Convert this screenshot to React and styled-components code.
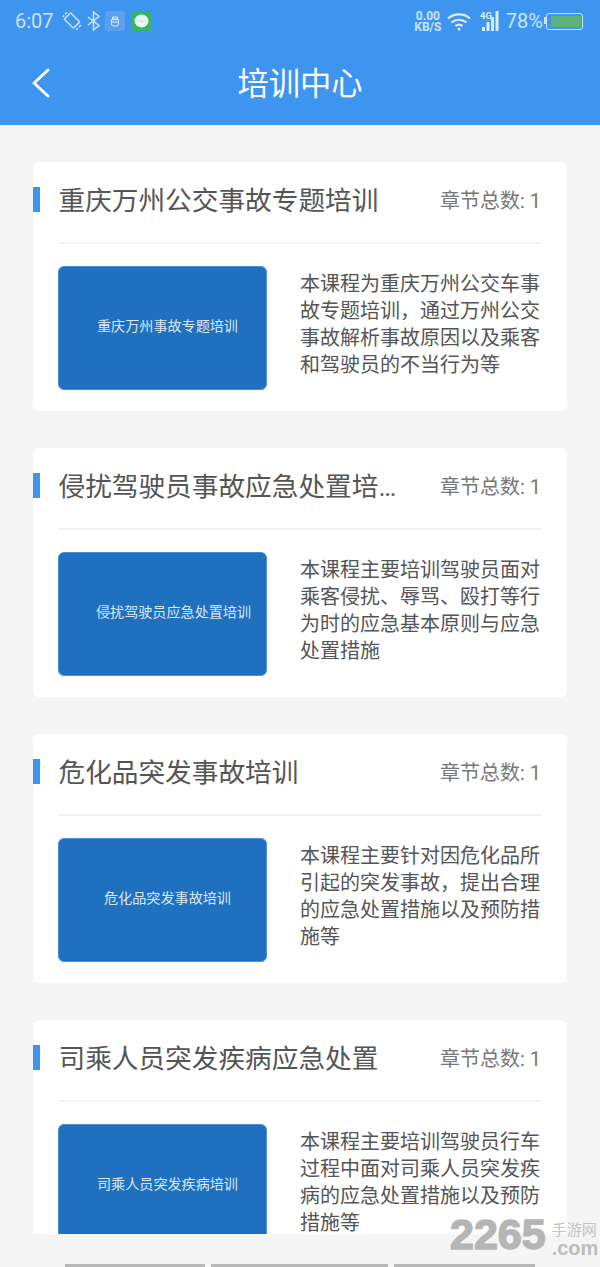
import styled, { createGlobalStyle } from 'styled-components';

const courses = [
  {
    title: '重庆万州公交事故专题培训',
    cover: '重庆万州事故专题培训',
    coverShift: 10,
    desc: '本课程为重庆万州公交车事故专题培训，通过万州公交事故解析事故原因以及乘客和驾驶员的不当行为等',
  },
  {
    title: '侵扰驾驶员事故应急处置培训课程',
    cover: '侵扰驾驶员应急处置培训',
    coverShift: 22,
    desc: '本课程主要培训驾驶员面对乘客侵扰、辱骂、殴打等行为时的应急基本原则与应急处置措施',
  },
  {
    title: '危化品突发事故培训',
    cover: '危化品突发事故培训',
    coverShift: 10,
    desc: '本课程主要针对因危化品所引起的突发事故，提出合理的应急处置措施以及预防措施等',
  },
  {
    title: '司乘人员突发疾病应急处置',
    cover: '司乘人员突发疾病培训',
    coverShift: 10,
    desc: '本课程主要培训驾驶员行车过程中面对司乘人员突发疾病的应急处置措施以及预防措施等',
  },
];

const GlobalStyle = createGlobalStyle`
  html, body {
    margin: 0;
    padding: 0;
    background: #f5f5f5;
  }
  * {
    box-sizing: border-box;
  }
`;

const Page = styled.div`
  position: relative;
  width: 600px;
  height: 1267px;
  display: flex;
  flex-direction: column;
  overflow: hidden;
  background: #f5f5f5;
  font-family: Roboto, 'Noto Sans CJK SC', sans-serif;
`;

const Header = styled.header`
  flex: none;
  height: 125px;
  background: #3e95ef;
  display: flex;
  flex-direction: column;
`;

const StatusBar = styled.div`
  height: 42px;
  padding: 0 17px 0 15px;
  display: flex;
  align-items: center;
  justify-content: space-between;
  color: #cde4fb;
`;

const StatusGroup = styled.div`
  display: flex;
  align-items: center;
`;

const Clock = styled.span`
  font-size: 20px;
  margin-right: 8px;
`;

const StatusIcon = styled.svg`
  flex: none;
  margin-left: ${(p) => p.$left || 0}px;
`;

const AppBadge = styled.div`
  width: 20px;
  height: 20px;
  margin-left: ${(p) => p.$left}px;
  border-radius: 3px;
  background: ${(p) => p.$color};
  display: flex;
  align-items: center;
  justify-content: center;
`;

const Speed = styled.div`
  width: 28px;
  display: flex;
  flex-direction: column;
  align-items: center;
  font-size: 12px;
  font-weight: 700;
  line-height: 11px;
  white-space: nowrap;
  margin-top: 2px;
`;

const BatteryText = styled.span`
  margin-left: 7px;
  font-size: 20px;
`;

const Battery = styled.div`
  position: relative;
  width: 37px;
  height: 17px;
  margin-left: 3px;
  padding: 2px 1.5px 2px 4px;
  border: 1.5px solid #cde4fb;
  border-radius: 3px;
  display: flex;

  &::before {
    content: '';
    position: absolute;
    left: -3.5px;
    top: 3.5px;
    width: 2px;
    height: 7px;
    background: #cde4fb;
  }
`;

const BatteryFill = styled.div`
  flex: 1;
  background: #5cb27a;
`;

const NavBar = styled.div`
  flex: 1;
  position: relative;
  display: flex;
  align-items: center;
  justify-content: center;
`;

const BackIcon = styled.svg`
  position: absolute;
  left: 31px;
  top: 26px;
`;

const NavTitle = styled.h1`
  margin: 3px 0 0;
  color: #fff;
  font-size: 31.3px;
  font-weight: 400;
  line-height: 1.2;
`;

const List = styled.main`
  height: 1109px;
  flex: none;
  overflow: hidden;
  padding: 37px 33px 0;
  display: flex;
  flex-direction: column;
  gap: 37px;
`;

const Card = styled.article`
  flex: none;
  height: 249px;
  background: #fff;
  border-radius: 6px;
  padding: 0 25px;
`;

const CardHead = styled.div`
  position: relative;
  height: 82px;
  display: flex;
  align-items: center;
  justify-content: space-between;
  border-bottom: 2px solid #f3f3f3;
`;

const Accent = styled.span`
  position: absolute;
  left: -25px;
  top: 25px;
  width: 7px;
  height: 25px;
  background: #3e95ef;
`;

const CardTitle = styled.h2`
  margin: 0 0 2px 0.5px;
  width: 345px;
  color: #555;
  font-size: 26.67px;
  font-weight: 400;
  line-height: 36px;
  white-space: nowrap;
  overflow: hidden;
  text-overflow: ellipsis;
`;

const Chapters = styled.span`
  margin: 0 1px 3px 0;
  color: #777;
  font-size: 20px;
  line-height: 28px;
  white-space: nowrap;
`;

const CardBody = styled.div`
  padding-top: 22px;
  display: flex;
  justify-content: space-between;
`;

const Cover = styled.div`
  flex: none;
  width: 209px;
  height: 124px;
  border-radius: 6px;
  background: #1f70bf;
  border: 1px solid #4d90d3;
  color: #dbe9f7;
  font-size: 14.1px;
  display: flex;
  align-items: center;
  justify-content: center;
  padding: 0 0 6px ${(p) => p.$shift}px;
`;

const Desc = styled.p`
  margin: 5px 0 0;
  width: 242px;
  color: #555;
  font-size: 20px;
  line-height: 27px;
`;

const BottomBars = styled.div`
  flex: 1;
  padding: 30px 65px 0;
  display: flex;
  gap: 6px;
`;

const BottomBar = styled.div`
  width: ${(p) => p.$w}px;
  height: 3px;
  background: #b8b8b8;
`;

const Watermark = styled.div`
  position: absolute;
  left: 450px;
  top: 1212px;
  display: flex;
  align-items: flex-start;
  color: #b5b5b5;
  font-family: 'Liberation Sans', sans-serif;
  font-weight: 700;
`;

const MarkNumber = styled.span`
  font-size: 43px;
  line-height: 44px;
  -webkit-text-stroke: 1.5px #b5b5b5;
`;

const MarkSide = styled.div`
  display: flex;
  flex-direction: column;
  margin: 7px 0 0 6px;
`;

const MarkCn = styled.span`
  font-family: 'Noto Sans CJK SC', sans-serif;
  font-weight: 400;
  font-size: 15px;
  line-height: 20px;
  color: #c4c4c4;
`;

const MarkCom = styled.span`
  font-size: 20px;
  line-height: 18px;
  color: #bdbdbd;
`;

const RotateIcon = () => (
  <StatusIcon width="20" height="20" viewBox="0 0 20 20" fill="none" stroke="#cde4fb" strokeWidth="1.5">
    <rect x="3.5" y="5" width="13" height="9" rx="1" transform="rotate(45 10 9.5)" />
    <path d="M1 6 L2 4 M3 3 L5 1.5 M14 18.5 L16 17.5 M17 16 L19 14" />
  </StatusIcon>
);

const BluetoothIcon = () => (
  <StatusIcon $left={5} width="13" height="20" viewBox="0 0 13 20" fill="none" stroke="#cde4fb" strokeWidth="1.5">
    <path d="M1 6 L12 14.5 L6.5 19 V1 L12 5.5 L1 14" />
  </StatusIcon>
);

const WifiIcon = () => (
  <StatusIcon $left={5} width="24" height="19" viewBox="0 0 24 19" fill="none" stroke="#dcedfd" strokeWidth="2.2">
    <path d="M1 6.5 C7 1 17 1 23 6.5" />
    <path d="M4.5 10.5 C9 6.8 15 6.8 19.5 10.5" />
    <path d="M8.5 14 C10.5 12.5 13.5 12.5 15.5 14" />
    <circle cx="12" cy="17" r="1.5" fill="#dcedfd" stroke="none" />
  </StatusIcon>
);

const SignalIcon = () => (
  <StatusIcon $left={9} width="19" height="22" viewBox="0 0 19 22" fill="#dcedfd">
    <text x="0" y="9" fontSize="9.5" fontWeight="700" fontFamily="Roboto, sans-serif">4G</text>
    <rect x="2" y="17" width="3" height="4" />
    <rect x="6.5" y="12" width="3" height="9" />
    <rect x="11" y="7" width="3" height="14" />
    <rect x="15.5" y="1" width="3" height="20" />
  </StatusIcon>
);

const App = () => (
  <Page>
    <GlobalStyle />
    <Header>
      <StatusBar>
        <StatusGroup>
          <Clock>6:07</Clock>
          <RotateIcon />
          <BluetoothIcon />
          <AppBadge $color="#5a9ff0" $left={5}>
            <svg width="10" height="11" viewBox="0 0 10 11" fill="none" stroke="#dcedfd" strokeWidth="1">
              <path d="M2.5 1 H7.5 V3 H2.5 Z M1.5 3.5 H8.5 V8 Q8.5 10 6.5 10 H3.5 Q1.5 10 1.5 8 Z M1.5 6 H8.5" />
            </svg>
          </AppBadge>
          <AppBadge $color="#36b464" $left={7}>
            <svg width="15" height="15" viewBox="0 0 15 15">
              <ellipse cx="7.5" cy="7" rx="7" ry="6.5" fill="#eaf7ee" />
              <circle cx="5" cy="7" r=".6" fill="#7cc796" />
              <circle cx="7.5" cy="7" r=".6" fill="#7cc796" />
              <circle cx="10" cy="7" r=".6" fill="#7cc796" />
            </svg>
          </AppBadge>
        </StatusGroup>
        <StatusGroup>
          <Speed>
            <span>0.00</span>
            <span>KB/S</span>
          </Speed>
          <WifiIcon />
          <SignalIcon />
          <BatteryText>78%</BatteryText>
          <Battery>
            <BatteryFill />
          </Battery>
        </StatusGroup>
      </StatusBar>
      <NavBar>
        <BackIcon width="20" height="30" viewBox="0 0 20 30" fill="none" stroke="#fff" strokeWidth="3" strokeLinecap="round" strokeLinejoin="round">
          <path d="M17 2 L3 15 L17 28" />
        </BackIcon>
        <NavTitle>培训中心</NavTitle>
      </NavBar>
    </Header>
    <List>
      {courses.map((course) => (
        <Card key={course.title}>
          <CardHead>
            <Accent />
            <CardTitle>{course.title}</CardTitle>
            <Chapters>章节总数: 1</Chapters>
          </CardHead>
          <CardBody>
            <Cover $shift={course.coverShift}>{course.cover}</Cover>
            <Desc>{course.desc}</Desc>
          </CardBody>
        </Card>
      ))}
    </List>
    <BottomBars>
      <BottomBar $w={140} />
      <BottomBar $w={177} />
      <BottomBar $w={141} />
    </BottomBars>
    <Watermark>
      <MarkNumber>2265</MarkNumber>
      <MarkSide>
        <MarkCn>手游网</MarkCn>
        <MarkCom>.com</MarkCom>
      </MarkSide>
    </Watermark>
  </Page>
);

export default App;
